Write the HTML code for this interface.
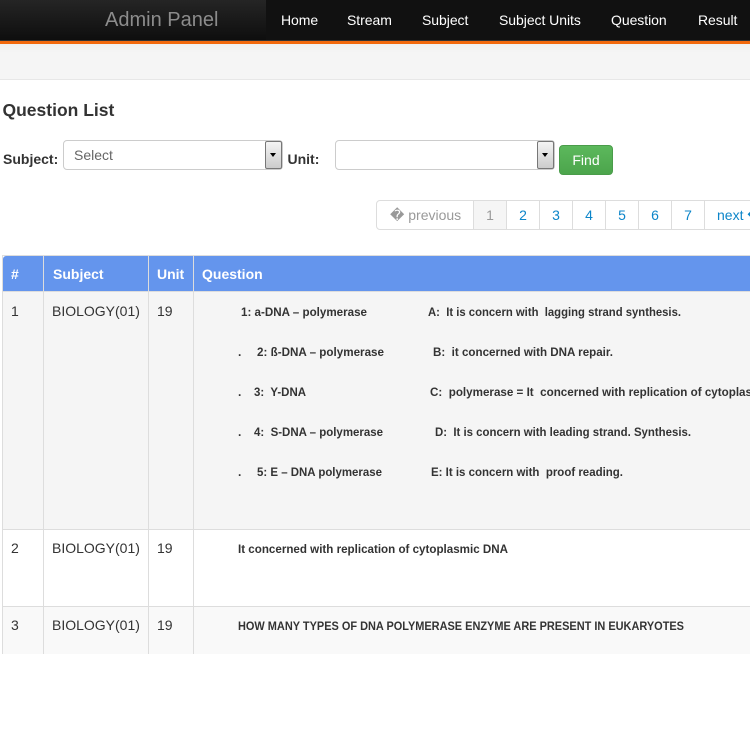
<!DOCTYPE html>
<html><head><meta charset="utf-8"><title>Question List</title>
<style>
html,body{margin:0;padding:0;background:#fff;}
body{width:750px;height:750px;overflow:hidden;position:relative;font-family:"Liberation Sans",Arial,sans-serif;color:#333;font-size:14px;}
.a{position:absolute;white-space:nowrap;}
.nav{left:0;top:0;width:750px;height:40px;background:#111;}
.brand{left:0;top:0;width:266px;height:40px;background:linear-gradient(#252525,#0e0e0e);}
.navline{left:0;top:40px;width:750px;height:1px;background:#333;}
.orange{left:0;top:41px;width:750px;height:3px;background:#f2690d;}
.sub{left:0;top:44px;width:750px;height:35px;background:linear-gradient(#f0f0f0,#f5f5f5 25%);border-bottom:1px solid #e7e7e7;}
.n{top:12px;color:#fff;font-size:14px;line-height:16px;letter-spacing:-.05px;}
.sel{top:140px;height:28px;border:1px solid #ccc;border-radius:4px;background:#fff;}
.arr{top:141px;width:15px;height:26px;border:1px solid #777;border-radius:2px;background:linear-gradient(#f4f4f4,#ccc);}
.arr i{position:absolute;left:4px;top:11px;width:0;height:0;border-left:3.5px solid transparent;border-right:3.5px solid transparent;border-top:4px solid #000;}
.lbl{font-weight:bold;font-size:14px;line-height:16px;color:#333;}
.pg{left:376px;top:200px;width:400px;height:28px;border:1px solid #ddd;border-radius:4px;background:#fff;}
.c{top:201px;height:28px;line-height:28px;text-align:center;font-size:14px;color:#0c85c9;border-left:1px solid #ddd;box-sizing:border-box;}
.h{top:266px;color:#fff;font-weight:bold;font-size:14px;line-height:16px;}
.t{top:303px;font-size:14px;line-height:16px;color:#333;}
.v{width:1px;background:#ddd;}
svg{position:absolute;left:0;top:0;}
svg text{font-family:"Liberation Sans",Arial,sans-serif;font-weight:bold;font-size:12px;fill:#333;white-space:pre;}
</style></head>
<body>
<div class="a nav"></div>
<div class="a brand"></div>
<div class="a navline"></div>
<div class="a orange"></div>
<div class="a" style="left:105px;top:8px;font-size:20px;line-height:24px;color:#8c8c8c;">Admin Panel</div>
<div class="a n" style="left:281px;">Home</div>
<div class="a n" style="left:347px;">Stream</div>
<div class="a n" style="left:422px;">Subject</div>
<div class="a n" style="left:499px;">Subject Units</div>
<div class="a n" style="left:611px;">Question</div>
<div class="a n" style="left:698px;">Result</div>
<div class="a sub"></div>

<div class="a" style="left:2.5px;top:99px;font-size:17.5px;line-height:22px;font-weight:bold;color:#333;">Question List</div>

<div class="a lbl" style="left:3px;top:151px;">Subject:</div>
<div class="a sel" style="left:63px;width:218px;"></div>
<div class="a" style="left:74px;top:147px;font-size:14px;line-height:16px;color:#666;">Select</div>
<div class="a arr" style="left:265px;"><i></i></div>
<div class="a lbl" style="left:287.5px;top:151px;">Unit:</div>
<div class="a sel" style="left:335px;width:218px;"></div>
<div class="a arr" style="left:537px;"><i></i></div>
<div class="a" style="left:559px;top:145px;width:52px;height:28px;border:1px solid #4a9c4a;border-radius:4px;background:linear-gradient(#5cb85c,#4ca54c);color:#fff;text-align:center;line-height:29px;font-size:14px;">Find</div>

<div class="a pg"></div>
<div class="a" style="left:390px;top:201px;line-height:28px;font-size:14px;color:#999;">� previous</div>
<div class="a c" style="left:473px;width:33px;background:#f5f5f5;color:#999;">1</div>
<div class="a c" style="left:506px;width:33px;">2</div>
<div class="a c" style="left:539px;width:33px;">3</div>
<div class="a c" style="left:572px;width:33px;">4</div>
<div class="a c" style="left:605px;width:33px;">5</div>
<div class="a c" style="left:638px;width:33px;">6</div>
<div class="a c" style="left:671px;width:33px;">7</div>
<div class="a c" style="left:704px;width:60px;text-align:left;padding-left:12px;">next �</div>

<div class="a" style="left:2px;top:255px;width:748px;height:1px;background:#ddd;"></div>
<div class="a" style="left:3px;top:256px;width:747px;height:36px;background:#6495ed;border-top-left-radius:3px;"></div>
<div class="a" style="left:3px;top:292px;width:747px;height:237px;background:#f5f5f5;"></div>
<div class="a" style="left:3px;top:530px;width:747px;height:76px;background:#fff;"></div>
<div class="a" style="left:3px;top:607px;width:747px;height:47px;background:#f9f9f9;"></div>
<div class="a" style="left:3px;top:291px;width:747px;height:1px;background:#ddd;"></div>
<div class="a" style="left:3px;top:529px;width:747px;height:1px;background:#ddd;"></div>
<div class="a" style="left:3px;top:606px;width:747px;height:1px;background:#ddd;"></div>
<div class="a v" style="left:2px;top:256px;height:398px;"></div>
<div class="a v" style="left:43px;top:256px;height:398px;"></div>
<div class="a v" style="left:148px;top:256px;height:398px;"></div>
<div class="a v" style="left:193px;top:256px;height:398px;"></div>

<div class="a h" style="left:11px;">#</div>
<div class="a h" style="left:53px;">Subject</div>
<div class="a h" style="left:157px;">Unit</div>
<div class="a h" style="left:202px;">Question</div>

<div class="a t" style="left:11px;">1</div>
<div class="a t" style="left:52px;">BIOLOGY(01)</div>
<div class="a t" style="left:157px;">19</div>
<div class="a t" style="left:11px;top:540px;">2</div>
<div class="a t" style="left:52px;top:540px;">BIOLOGY(01)</div>
<div class="a t" style="left:157px;top:540px;">19</div>
<div class="a t" style="left:11px;top:617px;">3</div>
<div class="a t" style="left:52px;top:617px;">BIOLOGY(01)</div>
<div class="a t" style="left:157px;top:617px;">19</div>

<svg width="750" height="750" viewBox="0 0 750 750" xml:space="preserve">
<text x="241" y="316" textLength="126" lengthAdjust="spacingAndGlyphs">1: a-DNA – polymerase</text>
<text x="428" y="316" textLength="253" lengthAdjust="spacingAndGlyphs">A:  It is concern with  lagging strand synthesis.</text>
<text x="238" y="356">.</text>
<text x="257" y="356" textLength="127" lengthAdjust="spacingAndGlyphs">2: ß-DNA – polymerase</text>
<text x="433" y="356" textLength="180" lengthAdjust="spacingAndGlyphs">B:  it concerned with DNA repair.</text>
<text x="238" y="396">.</text>
<text x="254" y="396" textLength="52" lengthAdjust="spacingAndGlyphs">3:  Y-DNA</text>
<text x="430" y="396" textLength="342" lengthAdjust="spacingAndGlyphs">C:  polymerase = It  concerned with replication of cytoplasmic</text>
<text x="238" y="436">.</text>
<text x="254" y="436" textLength="129" lengthAdjust="spacingAndGlyphs">4:  S-DNA – polymerase</text>
<text x="435" y="436" textLength="256" lengthAdjust="spacingAndGlyphs">D:  It is concern with leading strand. Synthesis.</text>
<text x="238" y="476">.</text>
<text x="257" y="476" textLength="125" lengthAdjust="spacingAndGlyphs">5: E – DNA polymerase</text>
<text x="431" y="476" textLength="192" lengthAdjust="spacingAndGlyphs">E: It is concern with  proof reading.</text>
<text x="238" y="553" textLength="270" lengthAdjust="spacingAndGlyphs">It concerned with replication of cytoplasmic DNA</text>
<text x="238" y="630" textLength="446" lengthAdjust="spacingAndGlyphs">HOW MANY TYPES OF DNA POLYMERASE ENZYME ARE PRESENT IN EUKARYOTES</text>
</svg>
</body></html>
